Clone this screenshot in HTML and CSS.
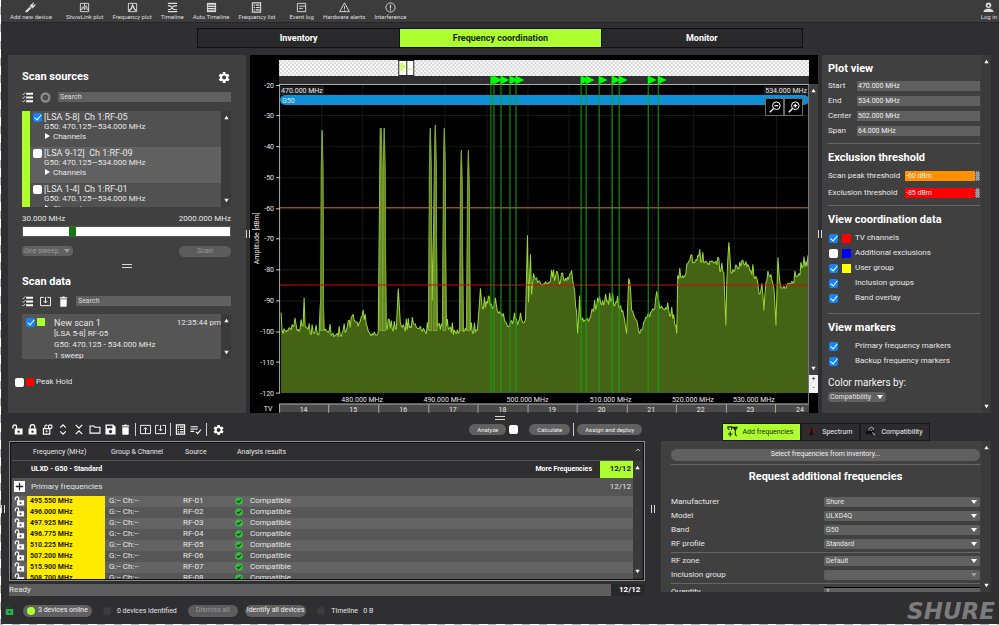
FILE: index.html
```html
<!DOCTYPE html>
<html lang="en">
<head>
<meta charset="utf-8">
<title>Frequency coordination</title>
<link rel="stylesheet" href="styles.css">
</head>
<body>
<svg class="sprite" aria-hidden="true">
  <symbol id="i-plug" viewBox="0 0 12 12"><path d="M1 11 6 6" stroke="currentColor" stroke-width="2.4"/><path d="M5 4 8 7 10.500 5 7.500 2z" fill="currentColor"/><path d="M8 2.500 9.500 1M9.800 4.200 11.300 2.700" stroke="currentColor" stroke-width="1.300"/></symbol>
  <symbol id="i-showlink" viewBox="0 0 12 12"><path d="M1.500 1.500h9v9h-9zM1.500 8h2V5.500h2V8h1V4.500h2V8h2M6 1.500v3" fill="none" stroke="currentColor"/></symbol>
  <symbol id="i-fplot" viewBox="0 0 12 12"><path d="M1.500 1.500h9v9h-9z" fill="none" stroke="currentColor"/><path d="M2 9.500 4.500 7.500 6 3.500 8 7.500l2 2" fill="none" stroke="currentColor" stroke-width="1.500"/></symbol>
  <symbol id="i-timeline" viewBox="0 0 12 12"><path d="M1 1.500h10M1 10.500h10M1 4l3 .5 3 3.500 4 .5M1 8.500 4 8l3-3.500L11 4" fill="none" stroke="currentColor" stroke-width="1.200"/></symbol>
  <symbol id="i-auto" viewBox="0 0 12 12"><path d="M1 1h10v10H1z" fill="currentColor"/><path d="M2 3.500h8M2 6h8M2 8.500h8" stroke="#3c3c3c"/></symbol>
  <symbol id="i-list" viewBox="0 0 12 12"><path d="M1.500 1h9v10h-9z" fill="none" stroke="currentColor" stroke-width="1.200"/><path d="M3 3.500h1.500M5.500 3.500H9.500M3 6h1.500M5.500 6H9.500M3 8.500h1.500M5.500 8.500H9.500" stroke="currentColor" stroke-width="1.300"/></symbol>
  <symbol id="i-log" viewBox="0 0 12 12"><path d="M1.500 1.500h9v9h-9zM3.500 4.500h7M3.500 7H7.500" fill="none" stroke="currentColor"/></symbol>
  <symbol id="i-alert" viewBox="0 0 12 12"><path d="M6 1 11.300 10.500H.7zM6 4.500v3M6 8.500v1" fill="none" stroke="currentColor"/></symbol>
  <symbol id="i-interf" viewBox="0 0 12 12"><circle cx="6" cy="6" r="5" fill="none" stroke="currentColor"/><path d="M6 3v4M6 8v1.300" stroke="currentColor" stroke-width="1.200"/></symbol>
  <symbol id="i-user" viewBox="0 0 12 12"><circle cx="6" cy="3.500" r="3" fill="currentColor"/><path d="M.5 11c0-5 11-5 11 0z" fill="currentColor"/><circle cx="6" cy="4" r="1.200" fill="#3c3c3c"/></symbol>
  <symbol id="i-gear" viewBox="0 0 24 24"><path fill="currentColor" fill-rule="evenodd" d="M19.400 13c.1-.6.1-1.400 0-2l2.100-1.600-2-3.500-2.500 1c-.5-.4-1.100-.7-1.700-1L15 3.300h-4l-.4 2.600c-.6.2-1.200.6-1.700 1l-2.500-1-2 3.500L6.500 11c-.1.600-.1 1.400 0 2l-2.100 1.600 2 3.500 2.500-1c.5.4 1.100.7 1.700 1l.4 2.600h4l.4-2.600c.6-.2 1.200-.6 1.700-1l2.500 1 2-3.500zM13 15.300a3.300 3.300 0 1 1 0-6.600 3.300 3.300 0 0 1 0 6.600z"/></symbol>
  <symbol id="i-check" viewBox="0 0 12 12"><path d="M4.500 2H12M4.500 6H12M4.500 10H12" stroke="currentColor" stroke-width="2.200"/><path d="M.5 2l1 1L3.500.5M.5 6l1 1L3.500 4.500M.5 10l1 1L3.500 8.500" fill="none" stroke="currentColor" stroke-width=".8"/></symbol>
  <symbol id="i-ring" viewBox="0 0 12 12"><circle cx="6" cy="6" r="4.300" fill="none" stroke="#8a8a8a" stroke-width="2.600"/><path d="M4.300 4.300h3.400v3.400H4.300z" fill="#555"/></symbol>
  <symbol id="i-import" viewBox="0 0 12 12"><path d="M4 1.500H.5v9h11v-9H8M6 1v6.500M4 5.500l2 2 2-2" fill="none" stroke="currentColor"/></symbol>
  <symbol id="i-export" viewBox="0 0 12 12"><path d="M.5 10.500v-9h11v9zM6 10V4M4 6l2-2 2 2" fill="none" stroke="currentColor"/></symbol>
  <symbol id="i-trash" viewBox="0 0 12 12"><path d="M2.500 3.500h7V11q0 .8-.8.800H3.300q-.8 0-.8-.8zM2 1.400h2.500L5 .6h2l.5.800H10v1.400H2z" fill="currentColor"/></symbol>
  <symbol id="i-unlock" viewBox="0 0 12 12"><path d="M1 5V3a2 2 0 0 1 4 0v2.500" fill="none" stroke="currentColor" stroke-width="1.400"/><path fill="currentColor" fill-rule="evenodd" d="M3 5h8.500v6.500H3zM7.200 7a1.300 1.300 0 1 0 .01 0z"/></symbol>
  <symbol id="i-lock" viewBox="0 0 12 12"><path d="M3.500 5V3.200a2.500 2.500 0 0 1 5 0V5" fill="none" stroke="currentColor" stroke-width="1.400"/><path fill="currentColor" fill-rule="evenodd" d="M1.700 5h8.600v6.500H1.700zM6 7a1.300 1.300 0 1 0 .01 0z"/></symbol>
  <symbol id="i-openlock" viewBox="0 0 12 12"><path d="M2.500 4V1.500M2.500 1.500h4" fill="none" stroke="#0b5c22" stroke-width="1.400"/><path fill="currentColor" fill-rule="evenodd" d="M1 4h10v8H1zM6 6.500a1.400 1.400 0 1 0 .01 0z"/></symbol>
  <symbol id="i-autolock" viewBox="0 0 12 12"><path d="M1.500 5h7v6h-7zM3 5V3a2 2 0 0 1 3-1.500" fill="none" stroke="currentColor" stroke-width="1.200"/><circle cx="9" cy="3" r="2" fill="none" stroke="currentColor" stroke-width="1.300"/><path d="M5 7v2M4 8h2" stroke="currentColor"/></symbol>
  <symbol id="i-expand" viewBox="0 0 12 12"><path d="M3 4 6 1l3 3M3 8l3 3 3-3" fill="none" stroke="currentColor" stroke-width="1.300"/></symbol>
  <symbol id="i-collapse" viewBox="0 0 12 12"><path d="M2.500 1 6 4.500 9.500 1M2.500 11 6 7.500 9.500 11" fill="none" stroke="currentColor" stroke-width="1.300"/></symbol>
  <symbol id="i-folder" viewBox="0 0 12 12"><path d="M.6 10V2.200h4L6 3.500h5.400V10z" fill="none" stroke="currentColor" stroke-width="1.200"/></symbol>
  <symbol id="i-save" viewBox="0 0 12 12"><path fill="currentColor" fill-rule="evenodd" d="M.5.5H9L11.500 3v8.500H.5zM2 2v2.500h6V2zM6 6.500a1.800 1.800 0 1 0 .01 0z"/></symbol>
  <symbol id="i-donelist" viewBox="0 0 12 12"><path d="M0 3h8M0 5.500h8M0 8h4M6 8.500l1.800 2L11.500 6" fill="none" stroke="currentColor" stroke-width="1.200"/></symbol>
  <symbol id="i-ok" viewBox="0 0 12 12"><circle cx="6" cy="6" r="5.800" fill="#2fbf3a"/><path d="M3 6l2.200 2.200L9 4" fill="none" stroke="#20301f" stroke-width="1.800"/></symbol>
  <symbol id="i-plus" viewBox="0 0 12 12"><path d="M0 0h12v12H0z" fill="#fff"/><path d="M6 2v8M2 6h8" stroke="#222" stroke-width="1.400"/></symbol>
  <symbol id="i-zoomout" viewBox="0 0 12 12"><circle cx="7.300" cy="4.700" r="3.800" fill="none" stroke="currentColor"/><path d="M5.500 4.700h3.600M4.500 7.500 .8 11.200" stroke="currentColor" stroke-width="1.300"/></symbol>
  <symbol id="i-zoomin" viewBox="0 0 12 12"><circle cx="7.300" cy="4.700" r="3.800" fill="none" stroke="currentColor"/><path d="M5.500 4.700h3.600M7.300 2.900v3.600M4.500 7.500 .8 11.200" stroke="currentColor" stroke-width="1.300"/></symbol>
  <symbol id="i-add" viewBox="0 0 12 12"><path d="M1 3V1h4v3M5.500 1.500h5.500L9 5v4l1.500 2M1 3.500h2M3.500 6v5.500M1 8.700h5" fill="none" stroke="#1c2a00" stroke-width="1.200"/><path d="M6 2h4.500L8.500 5z" fill="#1c2a00"/></symbol>
  <symbol id="i-spectrum" viewBox="0 0 12 12"><path d="M0 5h12" stroke="#a00" stroke-width="1.200"/><path d="M4 10 6 1l2 9z" fill="#111"/></symbol>
  <symbol id="i-compat" viewBox="0 0 12 12"><circle cx="6.500" cy="5" r="4" fill="#0c0c0c"/><path d="M4 5C4 1 9 0 9.500 4.500M6 5l2-1M8 7l3 3" fill="none" stroke="#aaa" stroke-width="1.200"/><path d="M1 6l2 3" stroke="#0c0c0c" stroke-width="2"/></symbol>
  <symbol id="i-up" viewBox="0 0 6 6"><path d="M3 .8 5.600 5.200H.4z" fill="currentColor"/></symbol>
  <symbol id="i-down" viewBox="0 0 6 6"><path d="M3 5.200 5.600.8H.4z" fill="currentColor"/></symbol>
</svg>

<div class="app">
  <header class="topbar">
    <nav class="tools" aria-label="Tools">
      <button class="tool tool-end"><svg><use href="#i-plug"/></svg>Add new device</button>
      <button class="tool"><svg><use href="#i-showlink"/></svg>ShowLink plot</button>
      <button class="tool"><svg><use href="#i-fplot"/></svg>Frequency plot</button>
      <button class="tool"><svg><use href="#i-timeline"/></svg>Timeline</button>
      <button class="tool"><svg><use href="#i-auto"/></svg>Auto Timeline</button>
      <button class="tool tool-end"><svg><use href="#i-list"/></svg>Frequency list</button>
      <button class="tool"><svg><use href="#i-log"/></svg>Event log</button>
      <button class="tool"><svg><use href="#i-alert"/></svg>Hardware alerts</button>
      <button class="tool"><svg><use href="#i-interf"/></svg>Interference</button>
    </nav>
    <button class="tool"><svg><use href="#i-user"/></svg>Log in</button>
  </header>

  <nav class="views" aria-label="Views">
    <a href="#inventory">Inventory</a><a href="#coordination" class="on">Frequency coordination</a><a href="#monitor">Monitor</a>
  </nav>

  <main class="upper">
    <aside class="panel scan">
      <div class="title-row"><h2>Scan sources</h2><button class="icon big" aria-label="Scan settings"><svg><use href="#i-gear"/></svg></button></div>
      <div class="search-row">
        <button class="icon" aria-label="Select all sources"><svg><use href="#i-check"/></svg></button>
        <button class="icon" aria-label="Stop"><svg><use href="#i-ring"/></svg></button>
        <input class="field grow" type="text" placeholder="Search" aria-label="Search sources">
      </div>
      <div class="sources">
        <ul class="source-list">
          <li><input type="checkbox" id="s1" checked><div><label for="s1">[LSA 5-8]&nbsp; Ch 1:RF-05</label><p>G50: 470.125—534.000 MHz</p><button class="twist">Channels</button></div></li>
          <li><input type="checkbox" id="s2"><div><label for="s2">[LSA 9-12]&nbsp; Ch 1:RF-09</label><p>G50: 470.125—534.000 MHz</p><button class="twist">Channels</button></div></li>
          <li><input type="checkbox" id="s3"><div><label for="s3">[LSA 1-4]&nbsp; Ch 1:RF-01</label><p>G50: 470.125—534.000 MHz</p><button class="twist">Channels</button></div></li>
        </ul>
        <div class="scroll"><svg><use href="#i-up"/></svg><i class="thumb"></i><svg><use href="#i-down"/></svg></div>
      </div>
      <div class="range-labels"><span>30.000 MHz</span><span>2000.000 MHz</span></div>
      <input class="range" type="range" min="0" max="100" value="23" aria-label="Scan range">
      <div class="sweep-row">
        <span class="select pill off"><select aria-label="Sweep mode" disabled><option>One sweep</option></select></span>
        <button class="btn off scan-btn" disabled>Scan</button>
      </div>
      <i class="grip-h"></i>
      <div class="title-row low"><h2>Scan data</h2></div>
      <div class="search-row low">
        <button class="icon" aria-label="Select all scans"><svg><use href="#i-check"/></svg></button>
        <button class="icon" aria-label="Import scan"><svg><use href="#i-import"/></svg></button>
        <button class="icon" aria-label="Delete scan"><svg><use href="#i-trash"/></svg></button>
        <input class="field grow" type="text" placeholder="Search" aria-label="Search scans">
      </div>
      <div class="scans">
        <div class="scan-item">
          <input type="checkbox" id="n1" checked><i class="swatch lime"></i>
          <div class="scan-text"><div class="scan-name"><label for="n1">New scan 1</label><time>12:35:44 pm</time></div><p>[LSA 5-8] RF-05</p><p>G50: 470.125 - 534.000 MHz</p><p>1 sweep</p></div>
        </div>
        <div class="scroll"><svg><use href="#i-up"/></svg><i class="thumb"></i><svg><use href="#i-down"/></svg></div>
      </div>
      <label class="peak"><input type="checkbox"><i class="swatch red"></i>Peak Hold</label>
    </aside>

    <div class="split"><i class="grip-v"></i></div>

    <section class="plot" aria-label="Spectrum plot">
      <svg class="chart" viewBox="250 55 558 357" id="chart">
        <defs><pattern id="checks" width="4" height="4" patternUnits="userSpaceOnUse"><path d="M0 0h4v4H0z" fill="#fff"/><path d="M0 0h2v2H0zM2 2h2v2H2z" fill="#d4d4d4"/></pattern></defs>
        <path d="M279 60h529v16H279z" fill="url(#checks)"/>
        <path d="M398.500 60.500h15v15h-15z" fill="#fff" stroke="#222"/>
        <path d="M406.500 61v15" stroke="#222"/><path d="M400 63h3v8h-3zM403 65h2v3h-2z" fill="#c5ff6a"/><path d="M407 69.500h6" stroke="#c5ff6a"/>
        <path d="M279 76h529v8H279z" fill="#2f2f31"/>
        <path d="M279 84.500h529" stroke="#b0b0b0"/>
        <g id="grid" stroke="#181818"></g>
        <g id="trace"></g>
        <path d="M280 207.500H808" stroke="#b87320"/>
        <path d="M280 284.500H808" stroke="#c41010"/>
        <path d="M280 86h44v9h-44zM763 86h44v9h-44z" fill="#1c1c1c"/>
        <rect x="280" y="95" width="528" height="10" rx="5" fill="#0f8fd6"/>
        <g id="markers"></g>
        <path d="M279.500 85V392.500" stroke="#a8a8a8"/>
        <path d="M807.500 85V403" stroke="#777"/>
        <g id="axis"></g>
        <g class="axis-text">
          <text x="281" y="93">470.000 MHz</text><text x="806" y="93" class="end">534.000 MHz</text>
          <text x="282" y="103">G50</text>
          <text x="268" y="410" class="mid">TV</text>
          <text class="mid" transform="translate(259 238) rotate(-90)">Amplitude [dBm]</text>
        </g>
      </svg>
      <div class="plot-side">
        <svg><use href="#i-up"/></svg><span class="fill"></span><svg><use href="#i-down"/></svg>
        <div class="steps"><button aria-label="Zoom amplitude in">+</button><button aria-label="Zoom amplitude out">-</button></div>
      </div>
      <div class="zoomers"><button aria-label="Zoom out"><svg><use href="#i-zoomout"/></svg></button><button aria-label="Zoom in"><svg><use href="#i-zoomin"/></svg></button></div>
    </section>

    <div class="split"><i class="grip-v"></i></div>

    <aside class="panel settings">
      <div class="settings-body">
        <h2>Plot view</h2>
        <div class="pairs">
          <label for="p1">Start</label><input class="field" id="p1" type="text" value="470.000 MHz">
          <label for="p2">End</label><input class="field" id="p2" type="text" value="534.000 MHz">
          <label for="p3">Center</label><input class="field" id="p3" type="text" value="502.000 MHz">
          <label for="p4">Span</label><input class="field" id="p4" type="text" value="64.000 MHz">
        </div>
        <hr>
        <h2>Exclusion threshold</h2>
        <div class="pairs wide">
          <label for="t1">Scan peak threshold</label><span class="spin"><input class="field orange" id="t1" type="text" value="-60 dBm"><i></i></span>
          <label for="t2">Exclusion threshold</label><span class="spin"><input class="field crimson" id="t2" type="text" value="-85 dBm"><i></i></span>
        </div>
        <hr>
        <h2>View coordination data</h2>
        <div class="checks">
          <label><input type="checkbox" checked><i class="swatch red"></i>TV channels</label>
          <label><input type="checkbox"><i class="swatch blue"></i>Additional exclusions</label>
          <label><input type="checkbox" checked><i class="swatch yellow"></i>User group</label>
          <label><input type="checkbox" checked><i class="swatch none"></i>Inclusion groups</label>
          <label><input type="checkbox" checked><i class="swatch none"></i>Band overlay</label>
        </div>
        <hr>
        <h2>View markers</h2>
        <div class="checks">
          <label><input type="checkbox" checked><i class="swatch none"></i>Primary frequency markers</label>
          <label><input type="checkbox" checked><i class="swatch none"></i>Backup frequency markers</label>
        </div>
        <label class="color-by" for="cb">Color markers by:</label>
        <span class="select pill"><select id="cb"><option>Compatibility</option></select></span>
      </div>
      <div class="scroll"><svg><use href="#i-up"/></svg><i class="thumb"></i><svg><use href="#i-down"/></svg></div>
    </aside>
  </main>

  <div class="hsplit"><i class="grip-h"></i></div>

  <div class="lower">
    <div class="edge"><i class="grip-v"></i></div>
    <section class="freqs">
      <div class="bar">
        <button class="icon" aria-label="Unlock"><svg><use href="#i-unlock"/></svg></button>
        <button class="icon" aria-label="Lock"><svg><use href="#i-lock"/></svg></button>
        <button class="icon" aria-label="Auto lock"><svg><use href="#i-autolock"/></svg></button>
        <button class="icon wide" aria-label="Expand"><svg><use href="#i-expand"/></svg></button>
        <button class="icon wide" aria-label="Collapse"><svg><use href="#i-collapse"/></svg></button>
        <button class="icon wide" aria-label="Open"><svg><use href="#i-folder"/></svg></button>
        <button class="icon" aria-label="Save"><svg><use href="#i-save"/></svg></button>
        <button class="icon" aria-label="Delete"><svg><use href="#i-trash"/></svg></button>
        <i class="bar-line"></i>
        <button class="icon" aria-label="Export"><svg><use href="#i-export"/></svg></button>
        <button class="icon" aria-label="Import"><svg><use href="#i-import"/></svg></button>
        <i class="bar-line"></i>
        <button class="icon" aria-label="List"><svg><use href="#i-list"/></svg></button>
        <button class="icon wide" aria-label="Done list"><svg><use href="#i-donelist"/></svg></button>
        <i class="bar-line"></i>
        <button class="icon big" aria-label="Settings"><svg><use href="#i-gear"/></svg></button>
        <span class="actions"><button class="btn">Analyze</button><input type="checkbox" aria-label="Auto analyze"><button class="btn calc">Calculate</button><i class="bar-line"></i><button class="btn">Assign and deploy</button></span>
      </div>
      <div class="table-box">
        <table>
          <thead>
            <tr class="head"><th class="c-lock"></th><th class="c-freq">Frequency (MHz)</th><th class="c-group">Group &amp; Channel</th><th class="c-src">Source</th><th>Analysis results</th><th class="c-more"></th><th class="c-count"></th></tr>
          </thead>
          <tbody>
            <tr class="set"><td></td><td colspan="4">ULXD - G50 - Standard</td><td class="right">More Frequencies</td><td class="count">12/12</td></tr>
            <tr class="primary"><td><svg class="ic"><use href="#i-plus"/></svg></td><td colspan="5">Primary frequencies</td><td class="right">12/12</td></tr>
          </tbody>
          <tbody id="rows"></tbody>
        </table>
        <div class="table-scroll"><svg><use href="#i-expand"/></svg><div class="scroll"><svg><use href="#i-up"/></svg><i class="thumb"></i><svg><use href="#i-down"/></svg></div></div>
      </div>
      <div class="ready"><span>Ready</span><b>12/12</b></div>
    </section>
    <div class="mid-split"><i class="grip-v"></i></div>
    <section class="request">
      <nav class="tabs" aria-label="Request">
        <a href="#add" class="on"><svg><use href="#i-add"/></svg>Add frequencies</a><a href="#spectrum"><svg><use href="#i-spectrum"/></svg>Spectrum</a><a href="#compat"><svg><use href="#i-compat"/></svg>Compatibility</a>
      </nav>
      <div class="panel request-panel">
        <div class="request-body">
          <button class="btn full">Select frequencies from inventory...</button>
          <hr>
          <h2>Request additional frequencies</h2>
          <div class="form">
            <label for="f1">Manufacturer</label><span class="select"><select id="f1"><option>Shure</option></select></span>
            <label for="f2">Model</label><span class="select"><select id="f2"><option>ULXD4Q</option></select></span>
            <label for="f3">Band</label><span class="select"><select id="f3"><option>G50</option></select></span>
            <label for="f4">RF profile</label><span class="select"><select id="f4"><option>Standard</option></select></span>
          </div>
          <hr>
          <div class="form">
            <label for="f5">RF zone</label><span class="select"><select id="f5"><option>Default</option></select></span>
            <label for="f6">Inclusion group</label><span class="select off"><select id="f6" disabled><option></option></select></span>
          </div>
          <hr>
          <div class="form"><label for="f7">Quantity</label><input class="field qty" id="f7" type="text" value="1"></div>
        </div>
        <div class="scroll"><svg><use href="#i-up"/></svg><i class="thumb"></i><svg><use href="#i-down"/></svg></div>
      </div>
    </section>
  </div>

  <footer class="foot">
    <svg class="ic green"><use href="#i-openlock"/></svg>
    <button class="btn online"><i class="dot lime"></i>3 devices online</button>
    <span class="ident"><i class="dot"></i>0 devices identified</span>
    <button class="btn off" disabled>Dismiss all</button>
    <button class="btn snug">Identify all devices</button>
    <span class="ident"><i class="dot"></i>Timeline&nbsp;&nbsp; 0 B</span>
    <strong class="brand">SHURE</strong>
  </footer>
</div>
<script src="app.js"></script>
</body>
</html>
```
FILE: styles.css
```css
* { box-sizing: border-box; }
body { margin: 0; font: 8px/10px Roboto, "Liberation Sans", sans-serif; color: #e6e6e6; background: #2f2f31; }
button, input, select { font: inherit; color: inherit; margin: 0; padding: 0; border: 0; border-radius: 0; background: none; }
h2, p, ul { margin: 0; padding: 0; list-style: none; }
h2 { font-size: 11px; line-height: 14px; font-weight: 700; color: #fff; }
hr { border: 0; border-top: 1px solid #666; margin: 0; width: 100%; }
a { color: inherit; text-decoration: none; }
i { font-style: normal; display: block; flex: none; }
svg { display: block; }
.sprite { position: absolute; width: 0; height: 0; }

.app { min-height: 100vh; display: flex; flex-direction: column; border-left: 1px solid; border-bottom: 1px solid; border-image: repeating-linear-gradient(135deg, #fff 0 6px, #bbb 6px 12px) 1; }
.topbar { display: flex; justify-content: space-between; height: 23px; padding: 2px 2px 0 9px; background: #3c3c3c; border-bottom: 1px solid #262626; }
.tools { display: flex; gap: 9px; }
.tool { display: flex; flex-direction: column; align-items: center; font-size: 6px; line-height: 8px; color: #ddd; white-space: nowrap; }
.tool svg { width: 11px; height: 11px; }
.tool-end { margin-right: 5px; }
.views { display: grid; grid-template-columns: 1fr 1fr 1fr; height: 20px; margin: 5px 196px 0; background: #29292b; border: 1px solid #111; font-size: 9px; font-weight: 700; line-height: 18px; text-align: center; color: #fff; }
.views a + a { border-left: 1px solid #111; }
.views .on { background: #adff2f; color: #1b2604; }

.upper { display: flex; margin: 7px 8px 0 7px; }
.panel { background: #404040; }
.split { flex: 0 0 4px; display: flex; align-items: center; justify-content: center; }
.settings, .scan { flex: none; }
.grip-v { width: 4px; height: 8px; border: solid #d8d8d8; border-width: 0 1px; }
.grip-h { width: 10px; height: 4px; border: solid #d8d8d8; border-width: 1px 0; }

.scan { width: 238px; padding: 15px 15px 0 14px; display: flex; flex-direction: column; }
.title-row { display: flex; justify-content: space-between; align-items: center; height: 14px; }
.title-row.low { margin-top: 7px; }
.icon { flex: none; width: 11px; height: 11px; color: #fff; }
.icon svg { width: 100%; height: 100%; }
.icon.big { width: 15px; height: 15px; }
.icon.wide { width: 12px; }
.search-row { display: flex; align-items: center; gap: 7px; height: 12px; margin: 7px 0 8px; }
.search-row.low { margin: 6px 0 7px; }
.field { min-width: 0; width: 100%; height: 10px; padding: 0 2px; background: #606060; font-size: 7px; line-height: 10px; color: #eee; }
.field::placeholder { color: #ddd; opacity: 1; }
.grow { flex: 1; }
.sources, .scans { display: flex; background: #505050; }
.sources { height: 96px; border-left: 8px solid #adff2f; }
.source-list { flex: 1; overflow: hidden; }
.source-list li { display: flex; gap: 2px; height: 36px; padding: 2px 3px 0; background: #515151; }
.source-list li:nth-child(2) { background: #616161; }
.source-list label { display: block; font-size: 9px; line-height: 9px; }
.twist { margin-left: 1px; }
.twist::before { content: ""; display: inline-block; border-left: 5px solid #fff; border-top: 3px solid transparent; border-bottom: 3px solid transparent; margin-right: 3px; }
.scroll { flex: 0 0 10px; display: flex; flex-direction: column; align-items: center; padding: 4px 0; background: #3a3a3a; color: #fff; }
.scroll svg, .plot-side svg { width: 5px; height: 5px; flex: none; }
.thumb { flex: 1; }

input[type=checkbox] { appearance: none; flex: none; width: 9px; height: 9px; border-radius: 2px; background: #fff; display: grid; place-items: center; }
input[type=checkbox]:checked { background: #1583f5; }
input[type=checkbox]:checked::after { content: ""; width: 3px; height: 6px; border: solid #fff; border-width: 0 1px 1px 0; transform: translateY(-1px) rotate(40deg); }

.range-labels { display: flex; justify-content: space-between; margin-top: 7px; }
.range { appearance: none; width: 100%; margin-top: 2px; background: #fff; border: 1px solid #555; height: 11px; }
.range::-webkit-slider-thumb { appearance: none; width: 7px; height: 9px; background: #0c7a0c; }
.sweep-row { display: flex; justify-content: space-between; align-items: center; height: 12px; margin-top: 8px; }
.btn { display: inline-flex; align-items: center; justify-content: center; height: 11px; padding: 0 8px; border-radius: 6px; background: #606060; font-size: 7px; line-height: 11px; color: #f0f0f0; white-space: nowrap; }
.btn.off { background: #5c5c5c; color: #999; }
.scan-btn { width: 52px; }
.select { position: relative; display: inline-flex; background: #606060; border-radius: 2px; }
.select::after { content: ""; position: absolute; right: 3px; top: 3px; border: 3px solid transparent; border-top: 4px solid #fff; border-bottom: 0; }
.select select { appearance: none; width: 100%; height: 10px; padding: 0 14px 0 2px; font-size: 7px; line-height: 10px; opacity: 1; }
.select.pill { border-radius: 4px; }
.select.off { color: #999; }
.select.off::after { border-top-color: #999; }
.scan > .grip-h { margin: 7px auto 0; }
.scans { height: 45px; }
.scan-item { flex: 1; min-width: 0; display: flex; gap: 2px; padding: 4px 0 0 4px; overflow: hidden; background: #555; }
.scan-text { flex: 1; min-width: 0; margin-left: 7px; }
.scan-name { display: flex; justify-content: space-between; }
.scan-name label { font-size: 9px; }
.scan-text p { line-height: 11px; }
.swatch { width: 8px; height: 8px; }
.lime { background: #adff2f; } .red { background: #f00; } .blue { background: #00f; } .yellow { background: #ff0; }
.peak { display: flex; align-items: center; gap: 2px; margin: 18px 0 0 -7px; }

.plot { position: relative; flex: 1; min-width: 0; display: flex; background: #000; }
.chart { flex: 1; min-width: 0; height: auto; }
.axis-text, #axis { font-size: 7px; fill: #e8e8e8; }
#axis text, .mid { text-anchor: middle; }
#axis .end, .end { text-anchor: end; }
.plot-side { flex: 0 0 9px; display: flex; flex-direction: column; align-items: center; margin: 29px 0 20px; padding-top: 4px; background: #404040; color: #fff; }
.plot-side .fill { flex: 1; }
.steps { width: 100%; margin-top: 4px; display: flex; flex-direction: column; background: #f2f2f2; color: #222; font-size: 7px; line-height: 9px; }
.zoomers { position: absolute; right: 15px; top: 43px; display: flex; }
.zoomers button { width: 19px; height: 18px; display: grid; place-items: center; background: #000; border: 1px solid #6a6a6a; color: #fff; }
.zoomers svg { width: 12px; height: 12px; }

.settings { width: 169px; display: flex; }
.settings-body { flex: 1; min-width: 0; padding: 7px 1px 6px 6px; }
.pairs { display: grid; grid-template-columns: 29px 1fr; row-gap: 5px; align-items: center; margin: 5px 0 7px; }
.pairs.wide { grid-template-columns: 77px 1fr; row-gap: 7px; margin: 6px 0 7px; }
.pairs .field { padding: 0 1px; }
.settings hr + h2 { margin-top: 7px; }
.spin { display: flex; }
.spin i { width: 5px; background: #999; border: 1px dotted #444; }
.pairs .orange { background: #ff9000; } .pairs .crimson { background: #f00; }
.checks { display: grid; gap: 5px; margin: 6px 0 10px; }
.checks label { display: flex; align-items: center; gap: 4px; height: 10px; padding-left: 1px; }
.checks .swatch { width: 9px; height: 9px; }
.color-by { display: block; font-size: 10px; line-height: 14px; margin: 0 0 2px; color: #f4f4f4; }

.hsplit { display: flex; justify-content: center; height: 9px; padding-top: 3px; }
.lower { display: flex; margin-right: 8px; }
.edge { flex: 0 0 8px; display: flex; align-items: center; }
.freqs { flex: 1 1 0; min-width: 0; display: flex; flex-direction: column; }
.bar { display: flex; align-items: center; gap: 4px; height: 16px; padding-left: 3px; }
.bar-line { width: 1px; height: 13px; background: #ccc; }
.bar .icon.big { width: 14px; height: 14px; }
.actions { margin-left: auto; margin-right: 3px; display: flex; align-items: center; gap: 3px; }
.actions .btn { font-size: 6px; }
.calc { margin-left: 8px; }
.table-box { display: flex; height: 140px; margin-top: 3px; padding: 2px; overflow: hidden; border: 1px solid #8a8a8a; outline: 1px solid #111; outline-offset: -2px; }
table { flex: 1; border-collapse: collapse; table-layout: fixed; width: 100%; height: max-content; }
td, th { padding: 0 4px; text-align: left; white-space: nowrap; font-weight: 400; }
.head { height: 17px; font-size: 7px; border-bottom: 1px solid #555; }
.head th { padding-left: 6px; }
.c-lock { width: 15px; } .c-freq { width: 78px; } .c-group { width: 74px; } .c-src { width: 52px; } .c-more { width: 90px; } .c-count { width: 33px; }
.set { height: 17px; font-size: 7px; color: #fff; }
.set td { font-weight: 700; }
.set .count { background: #adff2f; color: #1b2604; font-size: 8px; text-align: right; padding-right: 2px; }
.primary { height: 18px; background: #555; }
td.right { text-align: right; padding-right: 8px; }
.primary td.right { padding-right: 2px; }
.primary td:first-child, #rows td:first-child { padding: 0 2px; }
.ic { width: 11px; height: 11px; }
#rows tr { height: 11px; background: #636363; }
#rows tr:nth-child(even) { background: #575757; }
#rows .ic { color: #fff; height: 10px; }
#rows .hz { background: #ffeb00; color: #1a1a00; font-weight: 700; font-size: 7px; padding-left: 3px; }
#rows .result { display: flex; align-items: center; gap: 7px; }
#rows .result svg { width: 8px; height: 8px; }
.table-scroll { flex: 0 0 9px; display: flex; flex-direction: column; align-items: center; }
.table-scroll > svg { width: 8px; height: 17px; flex: none; clip-path: inset(0 0 50% 0); }
.table-scroll .scroll { flex: 1; width: 100%; }
.ready { display: flex; justify-content: space-between; height: 12px; margin-top: 3px; line-height: 12px; background: #5e5e5e; }
.ready b { width: 34px; padding-left: 8px; background: #29292b; color: #fff; }

.mid-split { flex: 0 0 16px; display: flex; align-items: center; justify-content: center; }
.request { flex: 0 0 330px; display: flex; flex-direction: column; }
.tabs { display: flex; justify-content: center; height: 18px; margin-top: 1px; font-size: 7px; }
.tabs a { display: flex; align-items: center; gap: 5px; padding: 0 7px 0 4px; border: 1px solid #1b1b1b; background: #2c2c2e; color: #eee; }
.tabs svg { width: 11px; height: 11px; }
.tabs .on { background: #adff2f; color: #1b2604; }
.request-panel { display: flex; height: 151px; overflow: hidden; }
.request-body { flex: 1; padding: 8px 1px 0 10px; }
.btn.full { display: flex; width: 100%; height: 12px; margin-bottom: 3px; }
.request h2 { text-align: center; margin: 5px 0 13px; }
.form { display: grid; grid-template-columns: 153px 1fr; row-gap: 4px; margin-bottom: 3px; align-items: center; }
hr + .form { margin-top: 3px; }
.qty { border-top: 1px solid #000; }

.foot { display: flex; align-items: center; gap: 7px; height: 26px; margin-top: 2px; padding: 0 4px; font-size: 7px; }
.green { color: #27b34a; width: 9px; }
.foot .online { gap: 3px; padding: 0 4px; margin-left: 2px; }
.foot .btn { height: 12px; }
.foot .snug { padding: 0 2px; }
.dot { width: 8px; height: 8px; border-radius: 50%; background: #3c3c3c; }
.dot.lime { background: #adff2f; }
.ident { display: flex; align-items: center; gap: 6px; margin: 0 4px; }
.brand { margin-left: auto; font: italic bold 23px/24px "DejaVu Sans", sans-serif; color: #7c7c7c; }
```
FILE: app.js
```js
const NS = 'http://www.w3.org/2000/svg';
function add(id, tag, attrs, text) {
  const el = document.createElementNS(NS, tag);
  for (const k in attrs) el.setAttribute(k, attrs[k]);
  if (text) el.textContent = text;
  document.getElementById(id).appendChild(el);
}

// Amplitude ticks and horizontal grid
for (let i = 0; i <= 10; i++) {
  const y = Math.floor(85 + i * 30.75);
  add('axis', 'path', { d: `M276 ${y}.5h4`, stroke: '#ccc' });
  add('axis', 'text', { x: 274, y: y + 3, class: 'end' }, String(-20 - i * 10));
  if (i && i < 10) add('grid', 'path', { d: `M280 ${y}.5H808` });
}
// Frequency labels and vertical grid
for (let x = 320.5; x < 808; x += 41.3) add('grid', 'path', { d: `M${Math.round(x)}.5 85V392` });
[[362, 480], [444, 490], [527, 500], [610, 510], [692, 520], [753, 530]].forEach(([x, f]) =>
  add('axis', 'text', { x, y: 401 }, f + '.000 MHz'));

// TV channel strip
const edges = [279, 328, 378, 428, 477, 527, 576, 626, 675, 725, 774, 808];
edges.slice(0, -1).forEach((x, i) => {
  add('axis', 'rect', { x, y: 403, width: edges[i + 1] - x, height: 9, fill: '#4a4a4a' });
  add('axis', 'path', { d: `M${x}.5 403v9M${x} 403.5H${edges[i + 1]}`, stroke: '#aaa' });
  add('axis', 'text', { x: i === 10 ? 799 : (x + edges[i + 1]) / 2, y: 411 }, String(14 + i));
});

// Spectrum trace: key points joined with a small deterministic ripple
let seed = 7;
const rnd = () => (seed = (seed * 16807) % 2147483647) / 2147483647;
const keys = [[281,312],[282,330],[290,328],[294,325],[300,328],[303,325],[304,297],[305,326],[310,332],[319,333],[321,296],[322,130],[323,296],[324,330],[340,334],[350,327],[354,320],[358,326],[362,315],[366,324],[372,333],[378,332],[380,128],[382,296],[384,128],[386,325],[390,328],[396,329],[398,288],[400,322],[404,327],[414,324],[418,328],[428,330],[430,128],[432,300],[435,125],[437,326],[442,325],[444,128],[446,326],[455,332],[459,331],[461,150],[463,331],[466,330],[468,150],[470,330],[477,330],[480,288],[482,308],[486,301],[490,306],[494,304],[499,311],[503,313],[507,326],[511,320],[518,321],[525,319],[527,235],[528,302],[530,254],[531,294],[533,273],[537,282],[545,281],[552,277],[560,281],[568,279],[571,270],[574,290],[577,333],[579,295],[580,318],[588,321],[592,309],[600,303],[611,300],[620,305],[624,320],[626,333],[628,278],[631,310],[636,320],[639,333],[645,317],[654,308],[656,291],[659,308],[665,307],[670,315],[673,314],[676,333],[677,275],[683,277],[687,263],[690,255],[694,262],[698,256],[704,262],[715,261],[720,270],[723,272],[725,325],[726,280],[728,242],[730,272],[736,266],[742,260],[748,266],[756,278],[759,294],[761,283],[763,310],[765,282],[770,274],[773,288],[775,325],[777,257],[779,282],[784,288],[790,283],[797,275],[802,266],[805,261],[808,264]];
const pts = [];
for (let k = 1; k < keys.length; k++) {
  const [x0, y0] = keys[k - 1], [x1, y1] = keys[k];
  pts.push([x0, y0]);
  for (let x = x0 + 1; x < x1; x++) {
    const steep = Math.abs(y1 - y0) / (x1 - x0) > 20;
    const ripple = rnd() > 0.85 ? -8 : (rnd() - 0.4) * 7;
    pts.push([x, y0 + (y1 - y0) * (x - x0) / (x1 - x0) + (steep ? 0 : ripple)]);
  }
}
const line = pts.map(([x, y]) => `${x} ${y.toFixed(1)}`).join('L');
add('trace', 'path', { d: `M281 392.500L${line}L808 392.500Z`, fill: '#456314' });
add('trace', 'path', { d: `M${line}`, fill: 'none', stroke: '#9ad838', 'stroke-width': 1, 'stroke-linejoin': 'bevel' });

// Carrier peaks
[[322,130],[381,128],[384,128],[430,128],[435,125],[444,128],[461,150],[468,150]].forEach(([x, y]) =>
  add('trace', 'path', { d: `M${x - 1.5} 330L${x - 1} ${y + 40}L${x} ${y}L${x + 1} ${y + 40}L${x + 1.5} 330Z`, fill: '#5f8322', stroke: '#7fa536' }));

// Frequency markers
[490, 493, 500, 509, 515, 580, 585, 598, 611, 618, 647, 657].forEach(x => {
  add('markers', 'path', { d: `M${x}.500 84V392`, stroke: '#12a812' });
  add('markers', 'path', { d: `M${x} 75.500l9 4.500-9 4.500z`, fill: '#0f0' });
});

// Frequency table rows
const list = ['495.550', '496.000', '497.925', '496.775', '510.225', '507.200', '515.900', '508.700'];
document.getElementById('rows').innerHTML = list.map((f, i) =>
  `<tr><td><svg class="ic"><use href="#i-unlock"/></svg></td><td class="hz">${f} MHz</td><td>G:-- Ch:--</td><td>RF-0${i + 1}</td><td colspan="3"><span class="result"><svg><use href="#i-ok"/></svg>Compatible</span></td></tr>`).join('');
```
